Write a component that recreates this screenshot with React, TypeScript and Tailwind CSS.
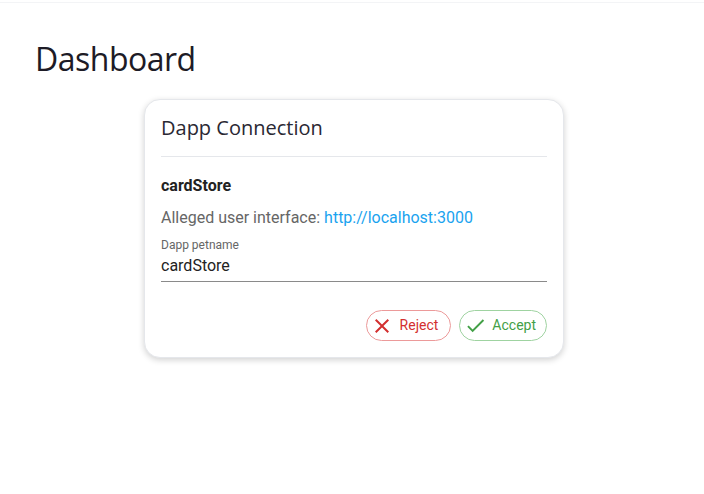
import React from 'react';

function XIcon() {
  return (
    <svg width="24" height="24" viewBox="0 0 24 24" className="shrink-0">
      <path d="M19 6.41 17.59 5 12 10.59 6.41 5 5 6.41 10.59 12 5 17.59 6.41 19 12 13.41 17.59 19 19 17.59 13.41 12z" fill="#d32f2f" />
    </svg>
  );
}

function CheckIcon() {
  return (
    <svg width="23" height="23" viewBox="0 0 24 24" className="shrink-0">
      <path d="M9 16.17 4.83 12l-1.42 1.41L9 19 21 7l-1.41-1.41z" fill="#43a047" />
    </svg>
  );
}

export default function App() {
  return (
    <div className="w-[704px] h-[494px] bg-white overflow-hidden flex flex-col" style={{ fontFamily: 'Roboto, "Liberation Sans", sans-serif' }}>
      <div className="h-[3px] border-b border-gray-100" />
      <div className="px-[35px] pt-[36px]">
        <h1 className="text-[32px] leading-[40px] text-[#1d1b26] tracking-[-0.5px]" style={{ fontFamily: '"Open Sans", sans-serif' }}>
          Dashboard
        </h1>
      </div>
      <div className="flex justify-center pl-[4px] pt-[20px]">
        <div className="w-[420px] rounded-2xl bg-white shadow-[0_2px_6px_rgba(0,0,0,0.18)] border border-gray-200 px-4 pt-[14px] pb-[16px]">
          <div className="text-[20px] leading-[28px] text-[#2a2833]" style={{ fontFamily: '"Open Sans", sans-serif' }}>
            Dapp Connection
          </div>
          <div className="h-px bg-gray-200 mt-[14px]" />
          <div className="mt-[19px] text-[16px] leading-[20px] font-bold text-[#222]">cardStore</div>
          <div className="mt-[12px] text-[16px] leading-[20px] text-[#666]">
            Alleged user interface: <span className="text-[#1aa3ef]">http://localhost:3000</span>
          </div>
          <div className="mt-[10px] text-[12px] leading-[14px] text-[#666]">Dapp petname</div>
          <div className="mt-[4px] text-[16px] leading-[20px] text-[#222] pb-[5px] border-b border-[#8a8a8a]">cardStore</div>
          <div className="flex justify-end gap-2 mt-[28px]">
            <button className="h-[31px] pl-[3px] pr-[12px] rounded-full border border-[#ec9a9a] flex items-center gap-[6px] text-[#d32f2f] text-[14px]">
              <XIcon />
              Reject
            </button>
            <button className="h-[31px] pl-[4px] pr-[10px] rounded-full border border-[#9fd3a1] flex items-center gap-[5px] text-[#43a047] text-[14px]">
              <CheckIcon />
              Accept
            </button>
          </div>
        </div>
      </div>
    </div>
  );
}
